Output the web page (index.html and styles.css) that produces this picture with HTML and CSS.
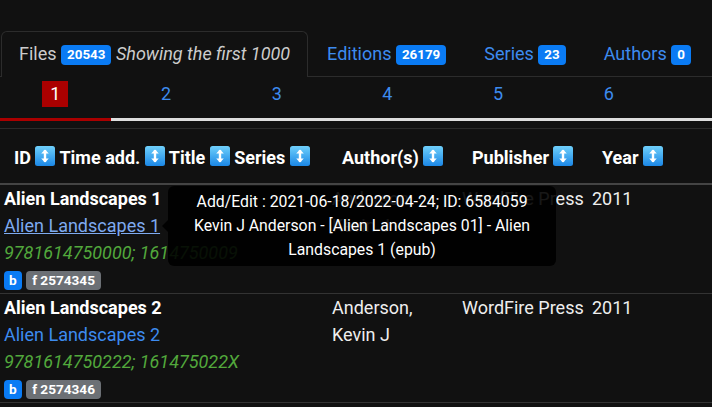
FILE: index.html
```html
<!DOCTYPE html>
<html lang="en">
<head>
    <meta charset="UTF-8">
    <meta name="viewport" content="width=device-width, initial-scale=1.0">
    <title>Files</title>
    <link rel="stylesheet" href="styles.css">
</head>
<body>
    <svg width="0" height="0" class="defs">
        <defs>
            <linearGradient id="sortGrad" x1="0" y1="0" x2="0" y2="1">
                <stop offset="0" stop-color="#6fd0fb"/>
                <stop offset="1" stop-color="#1b87e6"/>
            </linearGradient>
            <symbol id="sort" viewBox="0 0 20 20">
                <rect x="0" y="0" width="20" height="20" rx="2.5" fill="url(#sortGrad)"/>
                <path d="M10 4v12" stroke="#fff" stroke-width="2.4" fill="none"/>
                <path d="M6.2 7.4L10 3.4l3.8 4z M6.2 12.6L10 16.6l3.8-4z" fill="#fff"/>
            </symbol>
        </defs>
    </svg>

    <div class="page">
        <ul class="tabs">
            <li class="tab active">Files <span class="badge">20543</span> <i>Showing the first 1000</i></li>
            <li class="tab"><a href="#">Editions <span class="badge">26179</span></a></li>
            <li class="tab"><a href="#">Series <span class="badge">23</span></a></li>
            <li class="tab"><a href="#">Authors <span class="badge">0</span></a></li>
        </ul>

        <div class="pager">
            <span class="page-num"><span class="current">1</span></span>
            <span class="page-num"><a href="#">2</a></span>
            <span class="page-num"><a href="#">3</a></span>
            <span class="page-num"><a href="#">4</a></span>
            <span class="page-num"><a href="#">5</a></span>
            <span class="page-num"><a href="#">6</a></span>
        </div>
        <div class="progress"><div class="progress-fill" style="width: 111px"></div></div>

        <table class="results">
            <colgroup>
                <col class="c-title">
                <col class="c-author">
                <col class="c-publisher">
                <col>
            </colgroup>
            <thead>
                <tr>
                    <th>ID <svg class="sort"><use href="#sort"/></svg> Time add. <svg class="sort"><use href="#sort"/></svg> Title <svg class="sort"><use href="#sort"/></svg> Series <svg class="sort"><use href="#sort"/></svg></th>
                    <th>Author(s) <svg class="sort"><use href="#sort"/></svg></th>
                    <th>Publisher <svg class="sort"><use href="#sort"/></svg></th>
                    <th>Year <svg class="sort"><use href="#sort"/></svg></th>
                </tr>
            </thead>
            <tbody>
                <tr>
                    <td>
                        <div class="title">Alien Landscapes 1</div>
                        <div><span class="tip-anchor"><a href="#" class="series hover">Alien Landscapes 1</a>
                            <span class="tooltip">Add/Edit : 2021-06-18/2022-04-24; ID: 6584059 Kevin J Anderson - [Alien Landscapes 01] - Alien Landscapes 1 (epub)</span></span></div>
                        <div class="isbn">9781614750000; 1614750009</div>
                        <div class="tags"><span class="tag tag-b">b</span> <span class="tag tag-f">f 2574345</span></div>
                    </td>
                    <td class="author">Anderson, Kevin J</td>
                    <td>WordFire Press</td>
                    <td>2011</td>
                </tr>
                <tr>
                    <td>
                        <div class="title">Alien Landscapes 2</div>
                        <div><a href="#" class="series">Alien Landscapes 2</a></div>
                        <div class="isbn">9781614750222; 161475022X</div>
                        <div class="tags"><span class="tag tag-b">b</span> <span class="tag tag-f">f 2574346</span></div>
                    </td>
                    <td class="author">Anderson, Kevin J</td>
                    <td>WordFire Press</td>
                    <td>2011</td>
                </tr>
            </tbody>
        </table>
    </div>
</body>
</html>
```

FILE: styles.css
```css
body {
    margin: 0;
    background-color: #111111;
    color: #eeeeee;
    font-family: Roboto, "Liberation Sans", sans-serif;
    font-size: 18px;
    line-height: 27px;
    overflow: hidden;
}

.defs {
    position: absolute;
}

a {
    color: #3d8bef;
    text-decoration: none;
}

.page {
    padding-top: 31px;
}

/* tabs */
.tabs {
    display: flex;
    list-style: none;
    margin: 0;
    padding: 0 0 0 1px;
    border-bottom: 1px solid #2c2c2c;
}

.tab {
    height: 44px;
    line-height: 44px;
    padding: 0 18px;
    border: 1px solid transparent;
    border-bottom: none;
    margin-bottom: -1px;
    color: #3d8bef;
}

.tab.active {
    padding: 0 17px;
    color: #cccccc;
    background-color: #111111;
    border-color: #2c2c2c;
    border-radius: 6px 6px 0 0;
    height: 45px;
}

.badge {
    display: inline-block;
    background-color: #0a7bf4;
    color: #fff;
    font-size: 13.4px;
    font-weight: bold;
    line-height: 20px;
    padding: 0 6px;
    border-radius: 4px;
    vertical-align: 1px;
}

/* pagination */
.pager {
    display: grid;
    grid-template-columns: repeat(6, 110.7px);
    height: 32px;
    align-items: center;
}

.page-num {
    text-align: center;
}

.current {
    display: inline-block;
    background-color: #aa0000;
    color: #fff;
    line-height: 26px;
    padding: 0 8px;
}

.progress {
    height: 3px;
    margin: 9px 0 7px;
    background-color: #dddddd;
}

.progress-fill {
    height: 3px;
    background-color: #aa0000;
}

/* table */
.results {
    width: 100%;
    border-collapse: separate;
    border-spacing: 0;
    table-layout: fixed;
    border-top: 1px solid #2a2a2a;
}

.c-title {
    width: 328px;
}

.c-author,
.c-publisher {
    width: 130px;
}

.results th {
    text-align: left;
    font-weight: bold;
    color: #fff;
    padding: 15px 0 12px 14px;
    border-bottom: 2px solid #444444;
    white-space: nowrap;
}

.sort {
    width: 20px;
    height: 20px;
    vertical-align: -2px;
}

.results td {
    vertical-align: top;
    padding: 0 0 0 4px;
    border-bottom: 1px solid #333333;
}

.results td.author {
    padding-right: 12px;
}

.title {
    font-weight: bold;
    color: #fff;
}

.series.hover {
    color: #7eaaf0;
    text-decoration: underline;
}

.isbn {
    color: #52a83c;
    font-style: italic;
}

.tag {
    display: inline-block;
    color: #fff;
    font-size: 13.6px;
    font-weight: bold;
    line-height: 19px;
    padding: 0 5px;
    border-radius: 4px;
    vertical-align: 1px;
}

.tag-b {
    background-color: #0a7bf4;
}

.tag-f {
    background-color: #6c7075;
    padding: 0 6px;
}

/* tooltip */
.tip-anchor {
    position: relative;
}

.tooltip {
    position: absolute;
    left: calc(100% + 8px);
    top: 50%;
    transform: translateY(-50%);
    width: 388px;
    box-sizing: border-box;
    padding: 4px 8px;
    background-color: rgba(0, 0, 0, 0.9);
    color: #fff;
    border-radius: 6px;
    text-align: center;
    font-size: 15.8px;
    line-height: 24px;
    z-index: 2;
}

.tooltip::before {
    content: "";
    position: absolute;
    left: -6px;
    top: 50%;
    margin-top: -6px;
    border-style: solid;
    border-width: 6px 6px 6px 0;
    border-color: transparent rgba(0, 0, 0, 0.9) transparent transparent;
}
```
